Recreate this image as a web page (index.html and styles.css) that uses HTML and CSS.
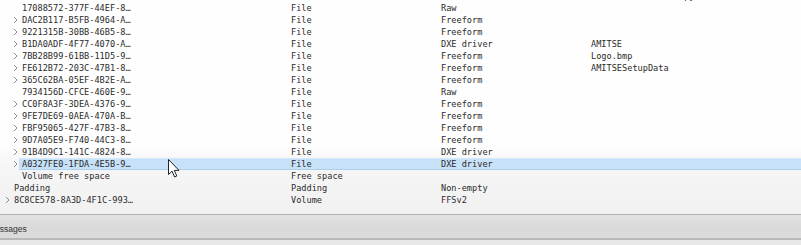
FILE: index.html
```html
<!DOCTYPE html>
<html>
<head>
    <title>Structure</title>
    <link rel="stylesheet" href="styles.css">
</head>
<body>
    <div class="tree">
        <div class="rows">
            <div class="row"><div class="name d1"><span class="chev"></span><span class="label">2E5A2B4F-AE9C-4C1A-8…</span></div><div class="cell">File</div><div class="cell">Freeform</div><div class="cell">DefaultsGlobalSetupy</div></div>
            <div class="row"><div class="name d1"><span class="chev"></span><span class="label">17088572-377F-44EF-8…</span></div><div class="cell">File</div><div class="cell">Raw</div><div class="cell"></div></div>
            <div class="row"><div class="name d1"><span class="chev"><svg viewBox="0 0 5 8"><path d="M1 1L4 4L1 7"/></svg></span><span class="label">DAC2B117-B5FB-4964-A…</span></div><div class="cell">File</div><div class="cell">Freeform</div><div class="cell"></div></div>
            <div class="row"><div class="name d1"><span class="chev"><svg viewBox="0 0 5 8"><path d="M1 1L4 4L1 7"/></svg></span><span class="label">9221315B-30BB-46B5-8…</span></div><div class="cell">File</div><div class="cell">Freeform</div><div class="cell"></div></div>
            <div class="row"><div class="name d1"><span class="chev"><svg viewBox="0 0 5 8"><path d="M1 1L4 4L1 7"/></svg></span><span class="label">B1DA0ADF-4F77-4070-A…</span></div><div class="cell">File</div><div class="cell">DXE driver</div><div class="cell">AMITSE</div></div>
            <div class="row"><div class="name d1"><span class="chev"><svg viewBox="0 0 5 8"><path d="M1 1L4 4L1 7"/></svg></span><span class="label">7BB28B99-61BB-11D5-9…</span></div><div class="cell">File</div><div class="cell">Freeform</div><div class="cell">Logo.bmp</div></div>
            <div class="row"><div class="name d1"><span class="chev"><svg viewBox="0 0 5 8"><path d="M1 1L4 4L1 7"/></svg></span><span class="label">FE612B72-203C-47B1-8…</span></div><div class="cell">File</div><div class="cell">Freeform</div><div class="cell">AMITSESetupData</div></div>
            <div class="row"><div class="name d1"><span class="chev"><svg viewBox="0 0 5 8"><path d="M1 1L4 4L1 7"/></svg></span><span class="label">365C62BA-05EF-4B2E-A…</span></div><div class="cell">File</div><div class="cell">Freeform</div><div class="cell"></div></div>
            <div class="row"><div class="name d1"><span class="chev"></span><span class="label">7934156D-CFCE-460E-9…</span></div><div class="cell">File</div><div class="cell">Raw</div><div class="cell"></div></div>
            <div class="row"><div class="name d1"><span class="chev"><svg viewBox="0 0 5 8"><path d="M1 1L4 4L1 7"/></svg></span><span class="label">CC0F8A3F-3DEA-4376-9…</span></div><div class="cell">File</div><div class="cell">Freeform</div><div class="cell"></div></div>
            <div class="row"><div class="name d1"><span class="chev"><svg viewBox="0 0 5 8"><path d="M1 1L4 4L1 7"/></svg></span><span class="label">9FE7DE69-0AEA-470A-B…</span></div><div class="cell">File</div><div class="cell">Freeform</div><div class="cell"></div></div>
            <div class="row"><div class="name d1"><span class="chev"><svg viewBox="0 0 5 8"><path d="M1 1L4 4L1 7"/></svg></span><span class="label">FBF95065-427F-47B3-8…</span></div><div class="cell">File</div><div class="cell">Freeform</div><div class="cell"></div></div>
            <div class="row"><div class="name d1"><span class="chev"><svg viewBox="0 0 5 8"><path d="M1 1L4 4L1 7"/></svg></span><span class="label">9D7A05E9-F740-44C3-8…</span></div><div class="cell">File</div><div class="cell">Freeform</div><div class="cell"></div></div>
            <div class="row"><div class="name d1"><span class="chev"><svg viewBox="0 0 5 8"><path d="M1 1L4 4L1 7"/></svg></span><span class="label">91B4D9C1-141C-4824-8…</span></div><div class="cell">File</div><div class="cell">DXE driver</div><div class="cell"></div></div>
            <div class="row selected"><div class="name d1"><span class="chev"><svg viewBox="0 0 5 8"><path d="M1 1L4 4L1 7"/></svg></span><span class="label">A0327FE0-1FDA-4E5B-9…</span></div><div class="cell">File</div><div class="cell">DXE driver</div><div class="cell"></div></div>
            <div class="row"><div class="name d1"><span class="chev"></span><span class="label">Volume free space</span></div><div class="cell">Free space</div><div class="cell"></div><div class="cell"></div></div>
            <div class="row"><div class="name d0"><span class="chev"></span><span class="label">Padding</span></div><div class="cell">Padding</div><div class="cell">Non-empty</div><div class="cell"></div></div>
            <div class="row"><div class="name d0"><span class="chev"><svg viewBox="0 0 5 8"><path d="M1 1L4 4L1 7"/></svg></span><span class="label">8C8CE578-8A3D-4F1C-993…</span></div><div class="cell">Volume</div><div class="cell">FFSv2</div><div class="cell"></div></div>
        </div>
        <!-- mouse pointer over the selected row -->
        <svg class="pointer" viewBox="0 0 12 19" width="12" height="19">
            <path d="M0.5 0.5L0.5 15.5L4 12.2L6.6 18L8.8 17L6.3 11.4L11 11.4Z" fill="#fff" stroke="#222" stroke-width="1" stroke-linejoin="round"/>
        </svg>
    </div>
    <div class="dock">
        <div class="dock-title"><span>Messages</span></div>
    </div>
</body>
</html>
```

FILE: styles.css
```css
html, body {
    margin: 0;
    padding: 0;
}

body {
    width: 801px;
    height: 245px;
    overflow: hidden;
    background-color: #e8e8e8;
    color: #2b2b2b;
    font-family: "DejaVu Sans Mono", "Liberation Mono", monospace;
    font-size: 8.6px;
}

.tree {
    position: relative;
    height: 214px;
    overflow: hidden;
    background: linear-gradient(to bottom, #fefefe 0, #fefefe 146px, #f9f9f9 156px, #f5f5f5 172px, #f1f1f1 214px);
    border-bottom: 1px solid #b3b3b3;
}

.rows {
    margin-top: -10px;
}

.row {
    display: grid;
    grid-template-columns: 286px 150px 150px 1fr;
    height: 12px;
    line-height: 12px;
    white-space: nowrap;
}

.name {
    display: flex;
    align-items: center;
    overflow: hidden;
}

.name.d0 {
    padding-left: 4px;
}

.name.d1 {
    padding-left: 12px;
}

.chev {
    width: 10px;
    height: 12px;
    flex: none;
    display: flex;
    align-items: center;
}

.chev svg {
    width: 5px;
    height: 8px;
    margin-left: 1px;
    fill: none;
    stroke: #8c8c8c;
    stroke-width: 1;
}

.label {
    flex: 1;
    margin-left: -3px;
    padding-left: 3px;
}

.cell {
    padding-left: 5px;
    overflow: hidden;
}

.row.selected .label,
.row.selected .cell {
    background-color: #c6e1f8;
    box-shadow: inset 0 -1px 0 #acd0f0, inset 0 1px 0 #d3e8fa;
}

.pointer {
    position: absolute;
    left: 168px;
    top: 159px;
}

.dock {
    height: 23px;
    background: linear-gradient(to bottom, #e4e4e4 0, #dedede 5px, #d9d9d9 14px, #dcdcdc 23px);
    border-bottom: 2px solid #b9b9b9;
    overflow: hidden;
}

.dock-title {
    padding-top: 8px;
    font-family: "Liberation Sans", Arial, sans-serif;
    font-size: 8.5px;
    color: #333;
    line-height: 12px;
}

.dock-title span {
    display: inline-block;
    margin-left: -12px;
}
```
